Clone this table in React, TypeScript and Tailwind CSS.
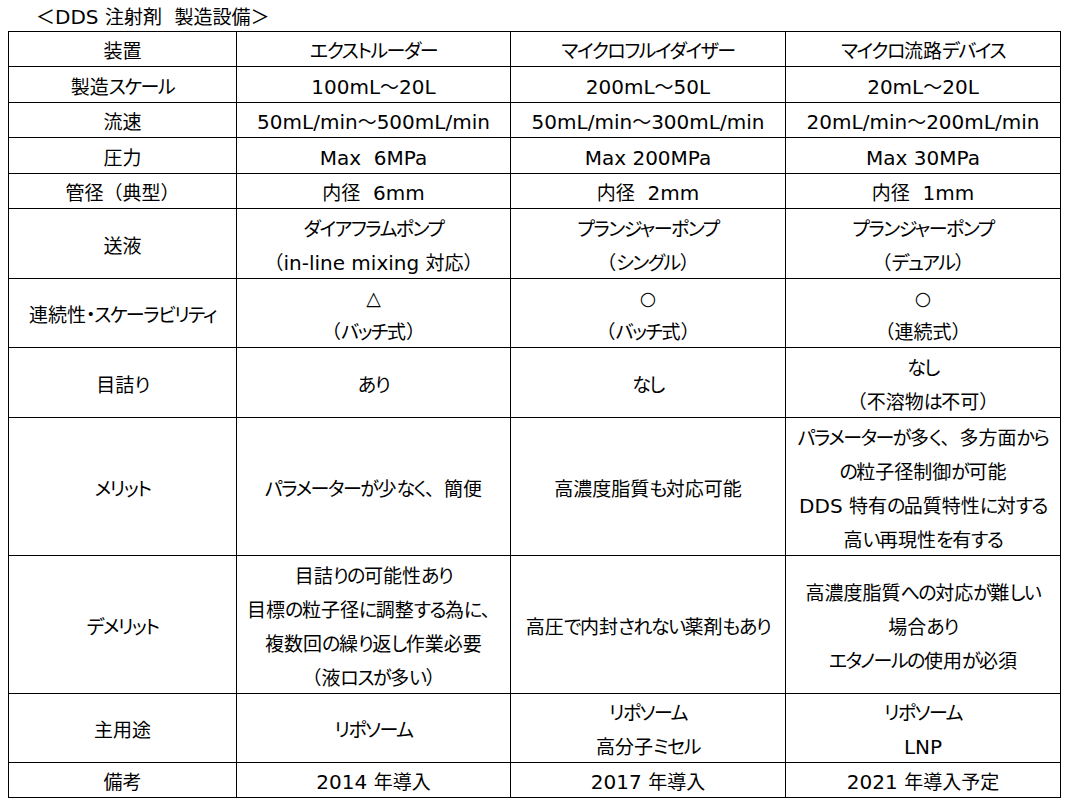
import React from 'react'

type Row = {
  label: string
  h: number
  cells: string[][]
}

const rows: Row[] = [
  { label: '装置', h: 35, cells: [['エクストルーダー'], ['マイクロフルイダイザー'], ['マイクロ流路デバイス']] },
  { label: '製造スケール', h: 36, cells: [['100mL～20L'], ['200mL～50L'], ['20mL～20L']] },
  { label: '流速', h: 35, cells: [['50mL/min～500mL/min'], ['50mL/min～300mL/min'], ['20mL/min～200mL/min']] },
  { label: '圧力', h: 36, cells: [['Max  6MPa'], ['Max 200MPa'], ['Max 30MPa']] },
  { label: '管径（典型）', h: 34, cells: [['内径  6mm'], ['内径  2mm'], ['内径  1mm']] },
  {
    label: '送液',
    h: 70,
    cells: [
      ['ダイアフラムポンプ', '（in-line mixing 対応）'],
      ['プランジャーポンプ', '（シングル）'],
      ['プランジャーポンプ', '（デュアル）'],
    ],
  },
  {
    label: '連続性・スケーラビリティ',
    h: 69,
    cells: [
      ['△', '（バッチ式）'],
      ['○', '（バッチ式）'],
      ['○', '（連続式）'],
    ],
  },
  { label: '目詰り', h: 70, cells: [['あり'], ['なし'], ['なし', '（不溶物は不可）']] },
  {
    label: 'メリット',
    h: 138,
    cells: [
      ['パラメーターが少なく、簡便'],
      ['高濃度脂質も対応可能'],
      ['パラメーターが多く、多方面から', 'の粒子径制御が可能', 'DDS 特有の品質特性に対する', '高い再現性を有する'],
    ],
  },
  {
    label: 'デメリット',
    h: 138,
    cells: [
      ['目詰りの可能性あり', '目標の粒子径に調整する為に、', '複数回の繰り返し作業必要', '（液ロスが多い）'],
      ['高圧で内封されない薬剤もあり'],
      ['高濃度脂質への対応が難しい', '場合あり', 'エタノールの使用が必須'],
    ],
  },
  {
    label: '主用途',
    h: 69,
    cells: [['リポソーム'], ['リポソーム', '高分子ミセル'], ['リポソーム', 'LNP']],
  },
  { label: '備考', h: 35, cells: [['2014 年導入'], ['2017 年導入'], ['2021 年導入予定']] },
]

// split text so latin and kana can be sized like the original Meiryo UI
function Runs({ text }: { text: string }) {
  const parts = text.match(/[\x20-\x7E]+|[\u3040-\u30FF]+|[^\x20-\x7E\u3040-\u30FF]+/g) || []
  return (
    <>
      {parts.map((p, i) => {
        if (/^[\x20-\x7E]+$/.test(p)) {
          return (
            <span key={i} className="text-[20px] whitespace-pre">
              {p}
            </span>
          )
        }
        if (/^[\u3040-\u30FF]+$/.test(p)) {
          return (
            <span key={i} className="tracking-[-1.5px] [font-feature-settings:'palt']">
              {p}
            </span>
          )
        }
        return <span key={i}>{p}</span>
      })}
    </>
  )
}

function Cell({ lines, h }: { lines: string[]; h: number }) {
  return (
    <td className="border border-black p-0 text-center align-middle" style={{ height: h }}>
      {lines.map((l) => (
        <div key={l} className="relative top-[2px] leading-[34px] whitespace-nowrap">
          <Runs text={l} />
        </div>
      ))}
    </td>
  )
}

export default function App() {
  return (
    <div className="bg-white w-[1068px] h-[804px] overflow-hidden text-black font-['DejaVu_Sans','Noto_Sans_CJK_JP',sans-serif] text-[19px]">
      <div className="h-[31px] pl-[36px] pt-[4px] leading-[26px]">
        <Runs text="＜DDS 注射剤  製造設備＞" />
      </div>
      <table className="ml-[8px] border-collapse table-fixed w-[1052px]">
        <colgroup>
          <col className="w-[228px]" />
          <col className="w-[274px]" />
          <col className="w-[275px]" />
          <col className="w-[275px]" />
        </colgroup>
        <tbody>
          {rows.map((r) => (
            <tr key={r.label}>
              <Cell lines={[r.label]} h={r.h} />
              {r.cells.map((c, i) => (
                <Cell key={i} lines={c} h={r.h} />
              ))}
            </tr>
          ))}
        </tbody>
      </table>
    </div>
  )
}
